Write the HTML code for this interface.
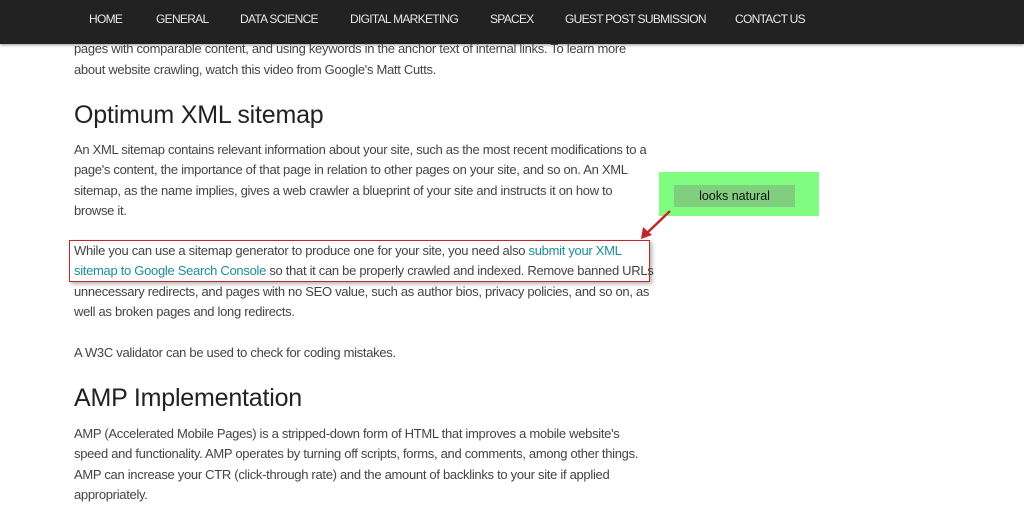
<!DOCTYPE html>
<html><head><style>
body{margin:0;width:1024px;height:508px;overflow:hidden;background:#fff;font-family:"Liberation Sans",sans-serif;position:relative}
.nav{position:absolute;top:0;left:0;width:1024px;height:44px;background:#222;box-shadow:0 1px 3px rgba(0,0,0,.4)}
.nav span{position:absolute;top:12px;color:#e8e8e8;font-size:12px;letter-spacing:-0.7px}
.t{position:absolute;left:74px;font-size:13px;color:#444;white-space:nowrap;letter-spacing:-0.3px}
h2{position:absolute;left:74px;margin:0;font-weight:normal;font-size:25px;color:#222;letter-spacing:-0.2px}
a{color:#1e8c96;text-decoration:none}
</style></head><body>
<div class="nav">
<span style="left:89px">HOME</span><span style="left:156px">GENERAL</span><span style="left:240px">DATA SCIENCE</span><span style="left:350px">DIGITAL MARKETING</span><span style="left:490px">SPACEX</span><span style="left:565px">GUEST POST SUBMISSION</span><span style="left:735px">CONTACT US</span>
</div>
<div class="t" style="top:41px">pages with comparable content, and using keywords in the anchor text of internal links. To learn more</div>
<div class="t" style="top:62px">about website crawling, watch this video from Google's Matt Cutts.</div>
<h2 style="top:101px">Optimum XML sitemap</h2>
<div class="t" style="top:142px">An XML sitemap contains relevant information about your site, such as the most recent modifications to a</div>
<div class="t" style="top:162px">page's content, the importance of that page in relation to other pages on your site, and so on. An XML</div>
<div class="t" style="top:183px">sitemap, as the name implies, gives a web crawler a blueprint of your site and instructs it on how to</div>
<div class="t" style="top:203px">browse it.</div>
<div class="t" style="top:243px">While you can use a sitemap generator to produce one for your site, you need also <a>submit your XML</a></div>
<div class="t" style="top:263px"><a>sitemap to Google Search Console</a> so that it can be properly crawled and indexed. Remove banned URLs</div>
<div class="t" style="top:284px">unnecessary redirects, and pages with no SEO value, such as author bios, privacy policies, and so on, as</div>
<div class="t" style="top:304px">well as broken pages and long redirects.</div>
<div class="t" style="top:345px">A W3C validator can be used to check for coding mistakes.</div>
<h2 style="top:384px">AMP Implementation</h2>
<div class="t" style="top:426px">AMP (Accelerated Mobile Pages) is a stripped-down form of HTML that improves a mobile website's</div>
<div class="t" style="top:446px">speed and functionality. AMP operates by turning off scripts, forms, and comments, among other things.</div>
<div class="t" style="top:467px">AMP can increase your CTR (click-through rate) and the amount of backlinks to your site if applied</div>
<div class="t" style="top:487px">appropriately.</div>
<div style="position:absolute;left:69px;top:240px;width:579px;height:40px;border:1.5px solid #c0272d;box-shadow:2px 2px 4px rgba(0,0,0,.3)"></div>
<div style="position:absolute;left:659px;top:172px;width:160px;height:44px;background:#80fc80"></div>
<div style="position:absolute;left:674px;top:185px;width:121px;height:22px;background:#7fcf7f;font-size:12.5px;color:#111;text-align:center;line-height:22px">looks natural</div>
<svg style="position:absolute;left:0;top:0" width="1024" height="508"><line x1="670" y1="211" x2="646" y2="234" stroke="#c0272d" stroke-width="2.5"/><polygon points="641,239 643,227 652,235" fill="#c0272d"/></svg>
</body></html>
